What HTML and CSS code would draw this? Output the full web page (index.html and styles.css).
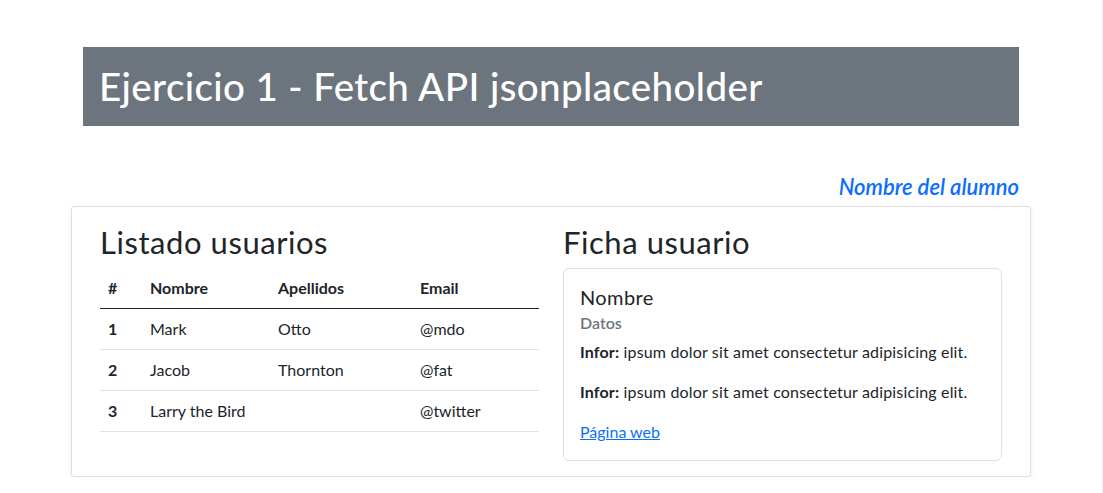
FILE: index.html
```html
<!DOCTYPE html>
<html lang="es">
<head>
<meta charset="utf-8">
<title>Ejercicio 1 - Fetch API jsonplaceholder</title>
<link rel="stylesheet" href="styles.css">
</head>
<body>
<div class="wrap">
  <div class="top">
    <header class="banner">
      <h1>Ejercicio 1 - Fetch API jsonplaceholder</h1>
    </header>
    <h4 class="student">Nombre del alumno</h4>
  </div>
  <main class="panel">
    <section class="col">
      <h2 class="section-title">Listado usuarios</h2>
      <table class="users">
        <thead>
          <tr>
            <th class="c-num">#</th>
            <th class="c-name">Nombre</th>
            <th class="c-last">Apellidos</th>
            <th class="c-mail">Email</th>
          </tr>
        </thead>
        <tbody>
          <tr><th>1</th><td>Mark</td><td>Otto</td><td>@mdo</td></tr>
          <tr><th>2</th><td>Jacob</td><td>Thornton</td><td>@fat</td></tr>
          <tr><th>3</th><td>Larry the Bird</td><td></td><td>@twitter</td></tr>
        </tbody>
      </table>
    </section>
    <section class="col">
      <h2 class="section-title">Ficha usuario</h2>
      <div class="user-card">
        <h5 class="card-title">Nombre</h5>
        <h6 class="card-subtitle">Datos</h6>
        <p class="card-text"><strong>Infor:</strong> ipsum dolor sit amet consectetur adipisicing elit.</p>
        <p class="card-text"><strong>Infor:</strong> ipsum dolor sit amet consectetur adipisicing elit.</p>
        <a href="#" class="card-link">Página web</a>
      </div>
    </section>
  </main>
</div>
</body>
</html>
```
FILE: styles.css
```css
*, *::before, *::after { box-sizing: border-box; }

html {
  min-height: 100%;
  border-right: 1px solid #ececec;
}

body {
  margin: 0;
  font-family: Lato, "Open Sans", sans-serif;
  font-size: 16px;
  line-height: 1.5;
  color: #212529;
  background: #fff;
}

.wrap {
  width: 960px;
  margin: 0 auto;
  padding-top: 47px;
}

.top {
  padding: 0 12px;
}

.banner {
  background: #6c757d;
  color: #fff;
  padding: 16px;
}

.banner h1 {
  margin: 0;
  font-size: 38.5px;
  font-weight: 500;
  line-height: 47px;
  letter-spacing: 0.4px;
}

.student {
  margin: 47px 0 5px;
  text-align: right;
  font-size: 22px;
  line-height: 28px;
  font-style: italic;
  font-weight: 600;
  color: #0d6efd;
}

.panel {
  display: grid;
  grid-template-columns: 1fr 1fr;
  column-gap: 24px;
  padding: 17px 28px 15px;
  border: 1px solid rgba(0, 0, 0, 0.125);
  border-radius: 3px;
  box-shadow: 0 2px 4px rgba(0, 0, 0, 0.075);
}

.section-title {
  margin: 0 0 7px;
  font-size: 31px;
  font-weight: 400;
  line-height: 37px;
  letter-spacing: 0.55px;
}

.users {
  width: 100%;
  border-collapse: collapse;
  margin-bottom: 16px;
}

.users th,
.users td {
  padding: 8px;
  text-align: left;
  vertical-align: top;
  border-bottom: 1px solid #dee2e6;
}

.users th { font-weight: 700; }

.users thead th { border-bottom-color: #212529; }

.c-num { width: 42px; }
.c-name { width: 128px; }
.c-last { width: 142px; }

.user-card {
  border: 1px solid rgba(0, 0, 0, 0.125);
  border-radius: 6px;
  padding: 16px;
}

.card-title {
  margin: 0 0 8px;
  font-size: 20px;
  font-weight: 400;
  line-height: 24px;
  letter-spacing: 0.4px;
}

.card-subtitle {
  margin: -4px 0 8px;
  font-size: 16px;
  font-weight: 600;
  line-height: 19px;
  color: #6c757d;
}

.card-text {
  margin: 0 0 16px;
  letter-spacing: 0.16px;
}

.card-text strong { font-weight: 700; }

.card-link {
  color: #0d6efd;
  text-decoration: underline;
}
```
